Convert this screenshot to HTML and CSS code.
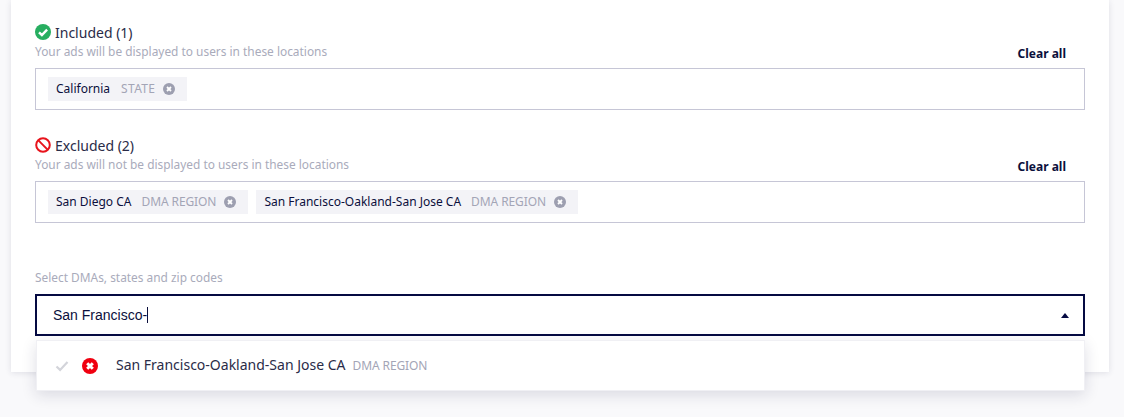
FILE: index.html
```html
<!DOCTYPE html>
<html>
<head>
    <title>Locations</title>
    <meta charset="utf-8">
    <link rel="stylesheet" href="styles.css">
</head>
<body>
<div class="card">
    <div class="group">
        <div class="group-head">
            <div>
                <div class="title">
                    <svg class="title-icon" viewBox="0 0 16 16" width="16" height="16">
                        <circle cx="8" cy="8" r="8" fill="#27ae60"/>
                        <path d="M4 8.3l2.9 2.7 5.2-5.4" fill="none" stroke="#fff" stroke-width="2.4"/>
                    </svg>
                    Included (1)
                </div>
                <div class="hint">Your ads will be displayed to users in these locations</div>
            </div>
            <a class="clear">Clear all</a>
        </div>
        <div class="box">
            <span class="chip">California<span class="kind kind-state">STATE</span>
                <svg class="chip-x" viewBox="0 0 12 12" width="12" height="12">
                    <circle cx="6" cy="6" r="6" fill="#9d9fb0"/>
                    <path d="M4 4l4 4M8 4l-4 4" stroke="#fff" stroke-width="1.8"/>
                </svg>
            </span>
        </div>
    </div>

    <div class="group">
        <div class="group-head">
            <div>
                <div class="title">
                    <svg class="title-icon" viewBox="0 0 16 16" width="16" height="16">
                        <circle cx="8" cy="8" r="6.8" fill="none" stroke="#e8141c" stroke-width="2"/>
                        <path d="M3.4 3.4l9.2 9.2" stroke="#e8141c" stroke-width="2"/>
                    </svg>
                    Excluded (2)
                </div>
                <div class="hint">Your ads will not be displayed to users in these locations</div>
            </div>
            <a class="clear">Clear all</a>
        </div>
        <div class="box">
            <span class="chip">San Diego CA<span class="kind">DMA REGION</span>
                <svg class="chip-x" viewBox="0 0 12 12" width="12" height="12">
                    <circle cx="6" cy="6" r="6" fill="#9d9fb0"/>
                    <path d="M4 4l4 4M8 4l-4 4" stroke="#fff" stroke-width="1.8"/>
                </svg>
            </span>
            <span class="chip">San Francisco-Oakland-San Jose CA<span class="kind">DMA REGION</span>
                <svg class="chip-x" viewBox="0 0 12 12" width="12" height="12">
                    <circle cx="6" cy="6" r="6" fill="#9d9fb0"/>
                    <path d="M4 4l4 4M8 4l-4 4" stroke="#fff" stroke-width="1.8"/>
                </svg>
            </span>
        </div>
    </div>

    <div class="picker">
        <div class="hint">Select DMAs, states and zip codes</div>
        <div class="select">
            <span class="typed">San Francisco-</span><span class="caret"></span>
            <span class="arrow"></span>
        </div>
        <div class="menu">
            <svg class="menu-check" viewBox="0 0 14 12" width="14" height="12">
                <path d="M1.5 6.5l3.6 3.4 7.4-7.8" fill="none" stroke="#d3d4da" stroke-width="2.2"/>
            </svg>
            <svg class="menu-x" viewBox="0 0 16 16" width="16" height="16">
                <circle cx="8" cy="8" r="8" fill="#f00010"/>
                <path d="M5.2 5.2l5.6 5.6M10.8 5.2l-5.6 5.6" stroke="#fff" stroke-width="3"/>
            </svg>
            <span class="menu-name">San Francisco-Oakland-San Jose CA</span>
            <span class="kind">DMA REGION</span>
        </div>
    </div>
</div>
</body>
</html>
```

FILE: styles.css
```css
* {
    margin: 0;
    padding: 0;
    box-sizing: border-box;
}

html, body {
    height: 417px;
    overflow: hidden;
}

body {
    background: #f9f9fb;
    font-family: "Noto Sans", "Open Sans", sans-serif;
    color: #0b0f3c;
}

.card {
    width: 1098px;
    height: 372px;
    margin-left: 11px;
    padding: 23px 24px 0;
    background: #fff;
    box-shadow: 0 1px 6px rgba(30, 30, 70, 0.12);
}

.group {
    margin-bottom: 26px;
}

.group-head {
    display: flex;
    justify-content: space-between;
    height: 45px;
}

.title {
    display: flex;
    align-items: center;
    gap: 4px;
    height: 18px;
    font-size: 14px;
    color: #2a2c48;
}

.hint {
    margin-top: 1px;
    font-size: 11.9px;
    line-height: 18px;
    color: #a9abbb;
}

.clear {
    align-self: flex-end;
    margin-right: 19px;
    margin-bottom: 6px;
    font-size: 12px;
    line-height: 16px;
    font-weight: 700;
    color: #0b0f3c;
}

.box {
    display: flex;
    gap: 8px;
    height: 42px;
    padding: 8px 12px;
    border: 1px solid #c6c6d6;
}

.chip {
    display: flex;
    align-items: center;
    height: 24px;
    padding: 0 12px 1px 8px;
    background: #f3f3f7;
    font-size: 12px;
    white-space: nowrap;
}

.kind {
    margin-left: 10px;
    font-size: 12px;
    letter-spacing: -0.1px;
    color: #a3a5b6;
}

.kind-state {
    margin-left: 11px;
    letter-spacing: 0.3px;
}

.chip-x {
    margin-left: 8px;
    margin-top: 1px;
}

.picker {
    margin-top: 45px;
    position: relative;
}

.select {
    display: flex;
    align-items: center;
    height: 42px;
    margin-top: 8px;
    padding: 0 14px 0 16px;
    border: 2px solid #050a42;
    font-family: "Liberation Sans", Arial, sans-serif;
    font-size: 14px;
    color: #0b0f3c;
}

.caret {
    width: 1px;
    height: 16px;
    background: #0b0f3c;
}

.arrow {
    margin-left: auto;
    width: 0;
    height: 0;
    border-left: 4.5px solid transparent;
    border-right: 4.5px solid transparent;
    border-bottom: 5px solid #050a42;
}

/* dropdown hangs over the bottom edge of the card */
.menu {
    position: absolute;
    top: 72px;
    left: 1px;
    right: 0;
    height: 51px;
    display: flex;
    align-items: center;
    padding-left: 18px;
    background: #fff;
    border: 1px solid #f0f0f4;
    box-shadow: 0 4px 14px rgba(30, 30, 70, 0.14);
}

.menu-x {
    margin-left: 13px;
}

.menu-name {
    margin-left: 18px;
    margin-bottom: 2px;
    font-size: 14px;
    color: #2a2c48;
}

.menu .kind {
    margin-left: 7px;
}
```
